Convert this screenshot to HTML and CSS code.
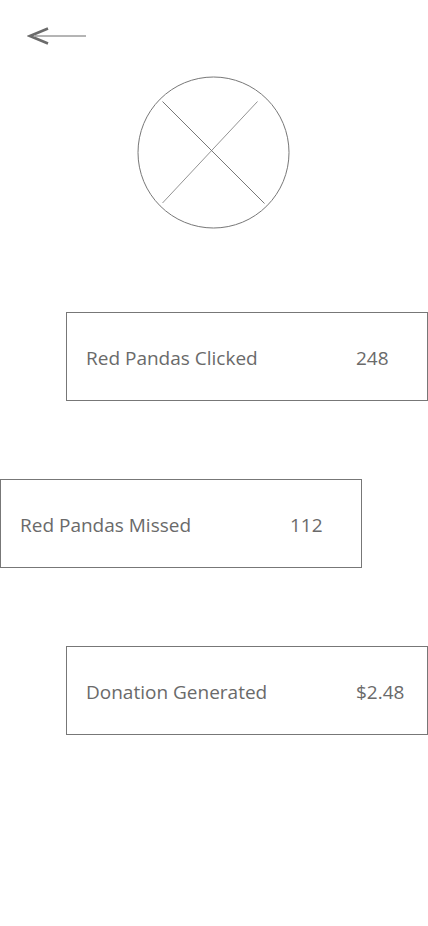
FILE: index.html
```html
<!DOCTYPE html>
<html lang="en">
<head>
    <meta charset="UTF-8">
    <meta name="viewport" content="width=device-width, initial-scale=1.0">
    <title>Results</title>
    <link rel="stylesheet" href="styles.css">
</head>
<body>

<!-- Back Button -->
<div class="top-bar">
    <a href="#" class="back-btn" aria-label="Back">
        <svg width="60" height="18" viewBox="0 0 60 18">
            <polyline points="21,1.5 3,9 21,16.5" fill="none" stroke="#6b6b6b" stroke-width="2.6"/>
            <line x1="8" y1="9" x2="59" y2="9" stroke="#6b6b6b" stroke-width="1"/>
        </svg>
    </a>
</div>

<!-- Image Placeholder -->
<div class="avatar-wrap">
    <svg class="avatar" width="153" height="153" viewBox="0 0 153 153">
        <circle cx="76.5" cy="76.5" r="75.5" fill="none" stroke="#777" stroke-width="1"/>
        <line x1="25.5" y1="25.5" x2="127.5" y2="127.5" stroke="#555" stroke-width="0.8"/>
        <line x1="120.5" y1="25.5" x2="25.5" y2="127" stroke="#777" stroke-width="0.8"/>
    </svg>
</div>

<!-- Stats -->
<div class="stats">
    <div class="stat-card right">
        <span class="stat-label">Red Pandas Clicked</span>
        <span class="stat-value">248</span>
    </div>
    <div class="stat-card left">
        <span class="stat-label">Red Pandas Missed</span>
        <span class="stat-value">112</span>
    </div>
    <div class="stat-card right">
        <span class="stat-label">Donation Generated</span>
        <span class="stat-value">$2.48</span>
    </div>
</div>

</body>
</html>
```

FILE: styles.css
```css
body { margin: 0; font-family: "Open Sans", "Noto Sans", Arial, sans-serif; color: #6a6a6a; background: #fff; }
.top-bar { padding: 27px 0 0 27px; height: 18px; }
.back-btn { display: inline-block; line-height: 0; }
.avatar-wrap { display: flex; justify-content: center; margin-top: 31px; padding-right: 2px; }
.avatar { display: block; }
.stats { display: flex; flex-direction: column; gap: 78px; margin-top: 83px; }
.stat-card { box-sizing: border-box; width: 362px; height: 89px; border: 1px solid #777; display: flex; align-items: center; padding: 2px 0 0 19px; font-size: 19px; }
.stat-card.right { margin-left: 66px; }
.stat-card.left { margin-left: 0; }
.stat-label { width: 270px; }
```
